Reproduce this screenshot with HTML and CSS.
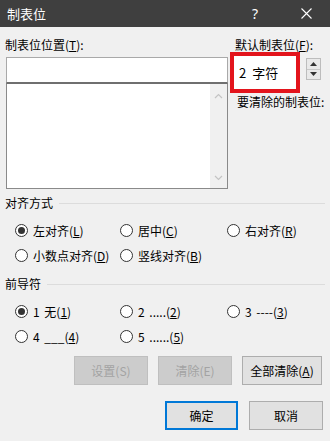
FILE: index.html
```html
<!DOCTYPE html>
<html lang="zh">
<head>
<meta charset="utf-8">
<link rel="stylesheet" href="styles.css">
</head>
<body>
<div class="dialog">
  <div class="titlebar">
    <span class="title">制表位</span>
    <span class="help">?</span>
    <span class="close">
      <svg width="11" height="11" viewBox="0 0 11 11"><path d="M0.5 0.5 L10.5 10.5 M10.5 0.5 L0.5 10.5" stroke="#fff" stroke-width="1.1" fill="none"/></svg>
    </span>
  </div>
  <div class="content">
    <div class="top">
      <div class="leftcol">
        <div class="label">制表位位置(<u>T</u>):</div>
        <div class="posinput"></div>
        <div class="listbox">
          <div class="scroll">
            <svg width="9" height="6" viewBox="0 0 9 6"><path d="M1 5 L4.5 1.5 L8 5" stroke="#c4c4c4" stroke-width="1.2" fill="none"/></svg>
            <svg width="9" height="6" viewBox="0 0 9 6"><path d="M1 1 L4.5 4.5 L8 1" stroke="#c4c4c4" stroke-width="1.2" fill="none"/></svg>
          </div>
        </div>
      </div>
      <div class="rightcol">
        <div class="label rlabel">默认制表位(<u>F</u>):</div>
        <div class="defrow">
          <div class="redbox"><div class="definput">2 字符</div></div>
          <div class="spinner">
            <div class="spin"><svg width="7" height="4" viewBox="0 0 7 4"><path d="M0 4 L3.5 0 L7 4Z" fill="#333"/></svg></div>
            <div class="spin"><svg width="7" height="4" viewBox="0 0 7 4"><path d="M0 0 L3.5 4 L7 0Z" fill="#333"/></svg></div>
          </div>
        </div>
        <div class="label clearlabel">要清除的制表位:</div>
      </div>
    </div>

    <div class="section first"><span>对齐方式</span><i></i></div>
    <div class="radios">
      <div class="radio"><b class="on"></b>左对齐(<u>L</u>)</div>
      <div class="radio"><b></b>居中(<u>C</u>)</div>
      <div class="radio"><b></b>右对齐(<u>R</u>)</div>
      <div class="radio"><b></b>小数点对齐(<u>D</u>)</div>
      <div class="radio"><b></b>竖线对齐(<u>B</u>)</div>
    </div>

    <div class="section second"><span>前导符</span><i></i></div>
    <div class="radios">
      <div class="radio"><b class="on"></b>1 无(<u>1</u>)</div>
      <div class="radio"><b></b>2 .....(<u>2</u>)</div>
      <div class="radio"><b></b>3 ----(<u>3</u>)</div>
      <div class="radio"><b></b>4 ___(<u>4</u>)</div>
      <div class="radio"><b></b>5 ......(<u>5</u>)</div>
    </div>

    <div class="btnrow row1">
      <div class="btn disabled">设置(S)</div>
      <div class="btn disabled">清除(E)</div>
      <div class="btn wide">全部清除(<u>A</u>)</div>
    </div>
    <div class="btnrow row2">
      <div class="btn default">确定</div>
      <div class="btn">取消</div>
    </div>
  </div>
</div>
</body>
</html>
```

FILE: styles.css
```css
* { box-sizing: border-box; }
html, body { margin: 0; padding: 0; }
body {
  width: 330px;
  height: 441px;
  background: #f0f0f0;
  font-family: "Noto Sans CJK SC", "Noto Sans", sans-serif;
  font-size: 12px;
  color: #000;
  overflow: hidden;
}
u { text-decoration: underline; text-underline-offset: 1px; }
.dialog { width: 330px; height: 441px; display: flex; flex-direction: column; }
.titlebar {
  height: 27px;
  background: #3f3f3f;
  color: #fff;
  display: flex;
  align-items: center;
  padding-left: 7px;
}
.title { font-size: 13px; line-height: 16px; flex: 1; }
.help { font-size: 14px; font-family: "Noto Sans", sans-serif; width: 20px; margin-right: 36px; text-align: center; line-height: 16px; }
.close { width: 11px; height: 11px; margin-right: 18px; display: flex; }
.content { padding: 0 5px 0 6px; flex: 1; display: flex; flex-direction: column; }
.label { line-height: 14px; height: 14px; white-space: nowrap; }
.top { display: flex; margin-top: 11px; }
.leftcol { width: 222px; display: flex; flex-direction: column; }
.leftcol .label { margin-left: -1px; }
.posinput {
  margin-top: 5px;
  height: 26px;
  background: #fff;
  border: 1px solid #a9a9a9;
  border-bottom: 1px solid #6f6f6f;
}
.listbox {
  height: 106px;
  background: #fff;
  border: 1px solid #8a8a8a;
  border-top: 1px solid #6f6f6f;
  display: flex;
  justify-content: flex-end;
}
.scroll {
  width: 17px;
  background: #f0f0f0;
  display: flex;
  flex-direction: column;
  justify-content: space-between;
  align-items: center;
  padding: 9px 0 7px;
}
.rightcol { margin-left: 2px; flex: 1; display: flex; flex-direction: column; }
.rlabel { margin-left: 5px; }
.defrow { display: flex; align-items: flex-start; }
.redbox {
  width: 70px;
  height: 41px;
  border: 4px solid #e3141c;
  background: #fff;
  padding: 1px;
}
.definput {
  height: 100%;
  padding-left: 4px;
  line-height: 31px;
  font-size: 13px;
  word-spacing: 3px;
}
.spinner {
  margin-left: 6px;
  margin-top: 6px;
  width: 15px;
  height: 22px;
  border: 1px solid #bdbdbd;
  background: #e9e9e9;
  display: flex;
  flex-direction: column;
}
.spin { flex: 1; display: flex; align-items: center; justify-content: center; }
.spin + .spin { border-top: 1px solid #c8c8c8; }
.clearlabel { margin-left: 7px; margin-top: 2px; }
.section { display: flex; align-items: center; line-height: 14px; height: 14px; margin-left: -1px; }
.section i { flex: 1; height: 1px; background: #dcdcdc; margin-left: 6px; }
.section.first { margin-top: 7px; }
.section.second { margin-top: 9px; }
.radios {
  display: grid;
  grid-template-columns: 105px 107px 1fr;
  grid-auto-rows: 25px;
  padding-left: 9px;
  margin-top: 8px;
}
.radio { display: flex; align-items: center; white-space: nowrap; word-spacing: 2px; }
.radio b {
  width: 13px; height: 13px;
  border: 1px solid #333;
  border-radius: 50%;
  background: #fff;
  margin-right: 5px;
  display: flex; align-items: center; justify-content: center;
  flex: none;
}
.radio b.on::after {
  content: "";
  width: 7px; height: 7px;
  border-radius: 50%;
  background: #333;
}
.btnrow { display: flex; justify-content: flex-end; gap: 10px; padding-right: 3px; }
.row1 { margin-top: 7px; }
.row2 { margin-top: 16px; gap: 11px; padding-right: 2px; }
.btn {
  width: 74px;
  height: 29px;
  border: 1px solid #adadad;
  background: #e1e1e1;
  display: flex; align-items: center; justify-content: center;
  white-space: nowrap;
}
.btn.wide { width: 80px; }
.btn.disabled { background: #cccccc; border-color: #bfbfbf; color: #a3a3a3; }
.btn.default { border: 2px solid #0078d7; width: 73px; }
```
